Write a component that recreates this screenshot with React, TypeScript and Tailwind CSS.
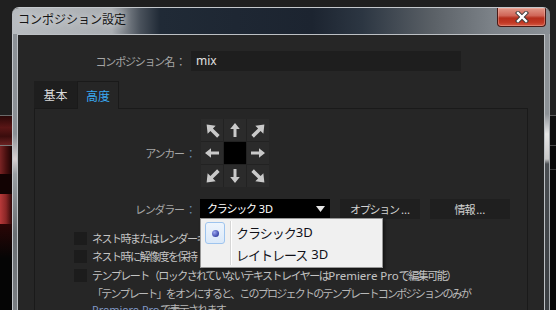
import React from "react";

function Arrow({ cls, big }: { cls: string; big?: boolean }) {
  return (
    <svg width={big ? 19 : 16} height={big ? 19 : 16} viewBox="0 0 16 16" className={cls}>
      <path d="M8 1 L12.8 7 L9.5 7 L9.5 15 L6.5 15 L6.5 7 L3.2 7 Z" fill="#c9c9c9" />
    </svg>
  );
}

function Cell({ children, center }: { children?: React.ReactNode; center?: boolean }) {
  return (
    <div className={center ? "w-[22px] h-[22px] bg-black" : "w-[22px] h-[22px] bg-[#2b2b2b] flex items-center justify-center overflow-hidden"}>
      {children}
    </div>
  );
}

function Check({ children }: { children: React.ReactNode }) {
  return (
    <div className="flex items-start h-[19px]">
      <div className="w-[13px] h-[13px] bg-[#1c1c1c] shrink-0" />
      <div className="ml-[5px] text-[11px] leading-[13px] tracking-[-1.5px] text-[#c4c4c4] whitespace-nowrap">{children}</div>
    </div>
  );
}

export default function App() {
  return (
    <div className="w-[556px] h-[310px] overflow-hidden bg-[#1f1f1f] flex items-start font-['Noto_Sans_CJK_JP',sans-serif]">
      {/* left desktop strip */}
      <div className="w-[12px] h-[310px] flex flex-col shrink-0">
        <div className="h-[115px] bg-[#202020]" />
        <div className="h-[1px] bg-[#6a6a6a]" />
        <div className="h-[29px] bg-[linear-gradient(to_bottom,#2a0808,#5a1616_40%,#3a0c0c_70%,#6a2222)]" />
        <div className="h-[1px] bg-[#7a7a7a]" />
        <div className="h-[28px] bg-[linear-gradient(to_right,#7a2424,#4a1010_50%,#1a0404)]" />
        <div className="h-[20px] bg-[#120303]" />
        <div className="h-[30px] bg-[linear-gradient(to_right,#b83a3a,#8a2626_50%,#300808)]" />
        <div className="flex-1 bg-[linear-gradient(to_bottom,#2a0606,#050505_40%,#050505)]" />
      </div>

      {/* window */}
      <div className="mt-[7px] w-[538px] h-[303px] flex flex-col rounded-t-[7px] overflow-hidden border-t border-[#c4c8cc] shrink-0">
        {/* title bar */}
        <div className="h-[26px] flex justify-between items-start bg-[linear-gradient(to_right,#b8bcc0_0px,#aaaeb2_100px,#4a525c_128px,#202a36_148px,#1c2430_300px,#2c3642_350px,#5a6066_420px,#7c8288_480px,#8a9096_100%)]">
          <div className="pl-[6px] pt-[2px] text-[12px] leading-[18px] text-[#141414] [text-shadow:0_0_6px_#eef0f2]">
            コンポジション設定
          </div>
          <div className="mr-[4px] w-[49px] h-[19px] rounded-b-[4px] border border-t-0 border-[#4a1a16] bg-[linear-gradient(to_bottom,#e29888_0%,#d06658_42%,#b52e1c_56%,#c23824_80%,#d45a44_100%)] flex items-center justify-center shadow-[inset_0_0_0_1px_rgba(255,200,190,0.35)]">
            <svg width="14" height="12" viewBox="0 0 14 12">
              <path d="M3 2 L11 10 M11 2 L3 10" stroke="#3a3a3a" strokeWidth="4.2" strokeLinecap="square" />
              <path d="M3 2 L11 10 M11 2 L3 10" stroke="#ffffff" strokeWidth="2.4" strokeLinecap="square" />
            </svg>
          </div>
        </div>

        <div className="flex-1 flex min-h-0">
          <div className="w-[5px] border-l border-[#c4c8cc] bg-[linear-gradient(to_bottom,#8c9196_0px,#8a8f94_100px,#d8d0d2_125px,#9a9ea2_140px,#6a6e72_200px,#7a7e82_100%)]" />
          {/* client */}
          <div className="w-[528px] bg-[#262626] border-t border-x border-[#bcc0c4] pt-[16px] pl-[16px] flex flex-col">
            {/* name row */}
            <div className="flex items-center h-[20px]">
              <div className="w-[151px] text-right text-[11px] tracking-[-1.2px] text-[#a6a6a6] whitespace-nowrap">
                コンポジション名 ：
              </div>
              <div className="ml-[6px] w-[270px] h-[20px] bg-[#1e1e1e] flex items-center pl-[5px] text-[12px] text-[#e0e0e0] font-['Noto_Sans',sans-serif]">
                mix
              </div>
            </div>

            {/* tabs */}
            <div className="mt-[10px] flex h-[27px]">
              <div className="w-[43px] bg-[#1e1e1e] flex items-center justify-center text-[12px] text-[#dcdcdc]">基本</div>
              <div className="w-[42px] h-[28px] relative z-10 bg-[#262626] border-t border-x border-[#1a1a1a] flex items-center justify-center text-[12px] text-[#3aaaf2]">
                高度
              </div>
            </div>

            {/* panel */}
            <div className="w-[494px] flex-1 border border-b-0 border-[#1a1a1a] pt-[10px] flex flex-col">
              {/* anchor */}
              <div className="flex items-center">
                <div className="w-[160px] text-right text-[11px] tracking-[-1.2px] text-[#a6a6a6] whitespace-nowrap">
                  アンカー<span className="text-[#6d8fb0]"> ：</span>
                </div>
                <div className="ml-[6px] grid grid-cols-3 gap-[1px] bg-[#222222]">
                  <Cell><Arrow cls="-rotate-45" big /></Cell>
                  <Cell><Arrow cls="rotate-0" /></Cell>
                  <Cell><Arrow cls="rotate-45" big /></Cell>
                  <Cell><Arrow cls="-rotate-90" /></Cell>
                  <Cell center />
                  <Cell><Arrow cls="rotate-90" /></Cell>
                  <Cell><Arrow cls="-rotate-135" big /></Cell>
                  <Cell><Arrow cls="rotate-180" /></Cell>
                  <Cell><Arrow cls="rotate-135" big /></Cell>
                </div>
              </div>

              {/* renderer */}
              <div className="mt-[12px] flex items-center h-[20px]">
                <div className="w-[160px] text-right text-[11px] tracking-[-1.2px] text-[#a6a6a6] whitespace-nowrap">
                  レンダラー<span className="text-[#6d8fb0]"> ：</span>
                </div>
                <div className="ml-[5px] w-[130px] h-[20px] relative z-20">
                  <div className="w-full h-full bg-black border-b border-[#3d86bf] flex items-center justify-between pl-[7px] pr-[5px]">
                    <span className="text-[11px] tracking-[-1.2px] text-white whitespace-nowrap">
                      クラシック<span className="ml-[3px] font-['Noto_Sans',sans-serif] tracking-normal">3D</span>
                    </span>
                    <svg width="9" height="6" viewBox="0 0 9 6"><path d="M0 0 L9 0 L4.5 6 Z" fill="#e6e6e6" /></svg>
                  </div>
                  {/* popup */}
                  <div className="absolute left-0 top-[19px] w-[183px] h-[50px] bg-[#f0f0f0] border border-[#979797] shadow-[2px_2px_3px_rgba(0,0,0,0.45)] flex">
                    <div className="w-[29px] flex flex-col items-start pt-[3px] pl-[4px]">
                      <div className="w-[20px] h-[22px] rounded-[3px] border border-[#9ec4ee] bg-[linear-gradient(to_bottom,#eef5fd,#dbe9f9)] flex items-center justify-center">
                        <div className="w-[7px] h-[7px] rounded-full bg-[radial-gradient(circle_at_35%_35%,#9aa6f0,#3a46a8_70%,#2a3288)]" />
                      </div>
                    </div>
                    <div className="w-[1px] my-[2px] bg-[#d6d6d6] border-r border-white box-content" />
                    <div className="flex flex-col pt-[3px] pl-[4px] text-[13px] tracking-[-1px] text-[#101018]">
                      <div className="h-[22px] flex items-center">クラシック<span className="font-['Noto_Sans',sans-serif] tracking-normal">3D</span></div>
                      <div className="h-[22px] flex items-center">レイトレース <span className="ml-[4px] font-['Noto_Sans',sans-serif] tracking-normal">3D</span></div>
                    </div>
                  </div>
                </div>
                <div className="ml-[10px] w-[80px] h-[20px] bg-[#1f1f1f] flex items-center justify-center text-[11px] tracking-[-1.2px] text-[#d2d2d2] whitespace-nowrap">
                  オプション<span className="ml-[2px] tracking-normal">...</span>
                </div>
                <div className="ml-[10px] w-[80px] h-[20px] bg-[#1f1f1f] flex items-center justify-center text-[11px] tracking-[-1.2px] text-[#d2d2d2] whitespace-nowrap">
                  情報<span className="ml-[2px] tracking-normal">...</span>
                </div>
              </div>

              {/* checkboxes */}
              <div className="mt-[13px] ml-[39px] flex flex-col">
                <div className="h-[18px]">
                  <Check>ネスト時またはレンダーキューでフレームレートを保持</Check>
                </div>
                <div className="h-[19px]">
                  <Check>ネスト時に解像度を保持</Check>
                </div>
                <div className="h-[16px]">
                  <Check>
                    テンプレート（ロックされていないテキストレイヤーは
                    <span className="font-['Noto_Sans',sans-serif] tracking-normal text-[11.5px]">Premiere Pro</span>
                    で編集可能）
                  </Check>
                </div>
                <div className="ml-[18px] text-[11px] leading-[16px] tracking-[-1.75px] text-[#b8b8b8] whitespace-nowrap">
                  <div>「テンプレート」をオンにすると、このプロジェクトのテンプレートコンポジションのみが</div>
                  <div>
                    <span className="font-['Noto_Sans',sans-serif] tracking-normal text-[#7f97c4]">Premiere Pro</span> で表示されます。
                  </div>
                </div>
              </div>
            </div>
          </div>
          <div className="w-[5px] border-r border-[#a4a8ac] bg-[linear-gradient(to_bottom,#8c9196_0px,#8c9196_80px,#e6e6e6_100px,#c8c8c8_125px,#4a4e52_130px,#3a3e42_100%)]" />
        </div>
      </div>

      {/* right desktop strip */}
      <div className="w-[6px] h-[310px] flex flex-col shrink-0">
        <div className="h-[115px] bg-[#202020]" />
        <div className="h-[1px] bg-[#5a5a5a]" />
        <div className="h-[29px] bg-[#0e0e0e]" />
        <div className="h-[1px] bg-[#4a4a4a]" />
        <div className="h-[23px] bg-[#0a0a0a]" />
        <div className="h-[1px] bg-[#3a3a3a]" />
        <div className="flex-1 bg-[#0a0a0a]" />
      </div>
    </div>
  );
}
